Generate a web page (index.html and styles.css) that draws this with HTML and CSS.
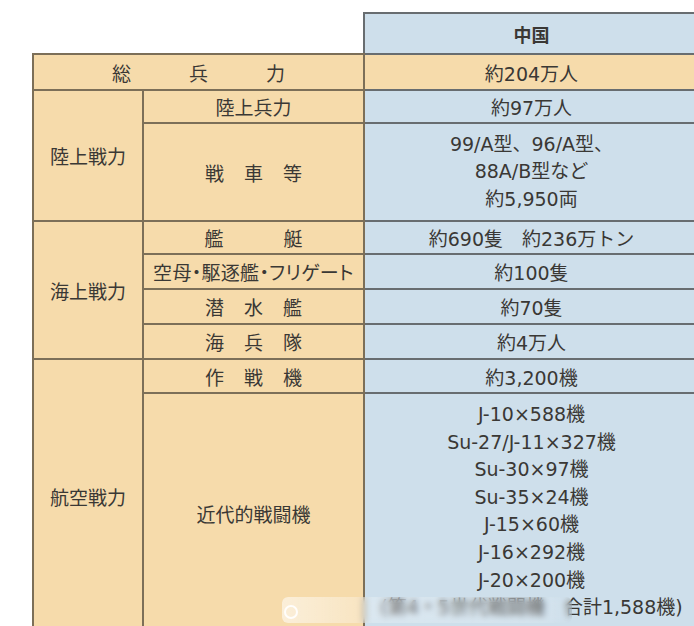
FILE: index.html
```html
<!DOCTYPE html>
<html lang="ja">
<head>
<meta charset="utf-8">
<title>中国 兵力</title>
<link rel="stylesheet" href="styles.css">
</head>
<body>
<div class="page">
<table class="mil">
  <colgroup><col class="c1"><col class="c2"><col class="c3"></colgroup>
  <tr class="h-head">
    <td class="blank" colspan="2"></td>
    <th class="val country">中国</th>
  </tr>
  <tr class="h-total">
    <td class="label" colspan="2"><span class="spaced s58">総兵力</span></td>
    <td class="val total">約204万人</td>
  </tr>
  <tr class="h-33">
    <td class="group" rowspan="2">陸上戦力</td>
    <td class="label">陸上兵力</td>
    <td class="val">約97万人</td>
  </tr>
  <tr class="h-tank">
    <td class="label"><span class="spaced s20">戦車等</span></td>
    <td class="val multi">99/A型、96/A型、<br>88A/B型など<br>約5,950両</td>
  </tr>
  <tr class="h-33">
    <td class="group" rowspan="4">海上戦力</td>
    <td class="label"><span class="spaced s60">艦艇</span></td>
    <td class="val">約690隻　約236万トン</td>
  </tr>
  <tr class="h-35">
    <td class="label narrow">空母・駆逐艦・フリゲート</td>
    <td class="val">約100隻</td>
  </tr>
  <tr class="h-35">
    <td class="label"><span class="spaced s20">潜水艦</span></td>
    <td class="val">約70隻</td>
  </tr>
  <tr class="h-35">
    <td class="label"><span class="spaced s20">海兵隊</span></td>
    <td class="val">約4万人</td>
  </tr>
  <tr class="h-34">
    <td class="group" rowspan="2">航空戦力</td>
    <td class="label"><span class="spaced s20">作戦機</span></td>
    <td class="val">約3,200機</td>
  </tr>
  <tr>
    <td class="label">近代的戦闘機</td>
    <td class="val multi fighters">J-10×588機<br>Su-27/J-11×327機<br>Su-30×97機<br>Su-35×24機<br>J-15×60機<br>J-16×292機<br>J-20×200機<br>(第4・5世代戦闘機　合計1,588機)</td>
  </tr>
</table>
<div class="watermark"><span class="wm-logo"></span></div>
</div>
</body>
</html>
```

FILE: styles.css
```css
html, body {
  margin: 0;
  padding: 0;
  background: #ffffff;
  overflow: hidden;
  height: 626px;
}

.page {
  position: relative;
  width: 694px;
  height: 626px;
  overflow: hidden;
}

.mil {
  border-collapse: collapse;
  table-layout: fixed;
  width: 666px;
  margin: 12px 0 0 32px;
  font-family: "DejaVu Sans", "Noto Sans CJK JP", sans-serif;
  font-size: 19px;
  color: #3a3835;
}

.c1 { width: 110px; }
.c2 { width: 221px; }
.c3 { width: 335px; }

.mil td, .mil th {
  padding: 0;
  text-align: center;
  vertical-align: middle;
  font-weight: normal;
  white-space: nowrap;
  border: 2px solid #7c6f58;
}

.mil td.blank {
  border: none;
  border-bottom: 2px solid #7c6f58;
  background: #ffffff;
}

.label, .group, .total {
  background: #f6dbab;
}

.val {
  background: #cedfeb;
  border-color: #686d70 !important;
}

.total {
  background: #f6dbab;
}

.country {
  font-family: "Noto Sans CJK JP", sans-serif;
  font-weight: 700 !important;
  font-size: 18px;
}

.group {
  font-family: "Noto Sans CJK JP", sans-serif;
}

.label {
  font-family: "Noto Sans CJK JP", sans-serif;
}

.narrow {
  font-feature-settings: "palt";
  letter-spacing: 0.3px;
}

.spaced { display: inline-block; }
.s20 { letter-spacing: 20px; margin-right: -20px; }
.s58 { letter-spacing: 58px; margin-right: -58px; }
.s60 { letter-spacing: 60px; margin-right: -60px; }

.multi { line-height: 27.6px; }

.fighters {
  line-height: 27.6px;
  padding: 7px 0 12px !important;
}

.h-head { height: 41px; }
.h-total { height: 36px; }
.h-33 { height: 33px; }
.h-tank { height: 98px; }
.h-34 { height: 34px; }
.h-35 { height: 35px; }

.watermark {
  position: absolute;
  left: 282px;
  top: 597px;
  width: 290px;
  height: 26px;
  background: linear-gradient(90deg, rgba(255,255,255,0.55), rgba(255,255,255,0.25) 30%, rgba(255,255,255,0.15) 90%, rgba(255,255,255,0));
  backdrop-filter: blur(3px);
  border-radius: 6px;
}

.wm-logo {
  position: absolute;
  left: 2px;
  top: 8px;
  width: 14px;
  height: 14px;
  border-radius: 50%;
  border: 2px solid rgba(255,255,255,0.9);
  box-sizing: border-box;
}
```
